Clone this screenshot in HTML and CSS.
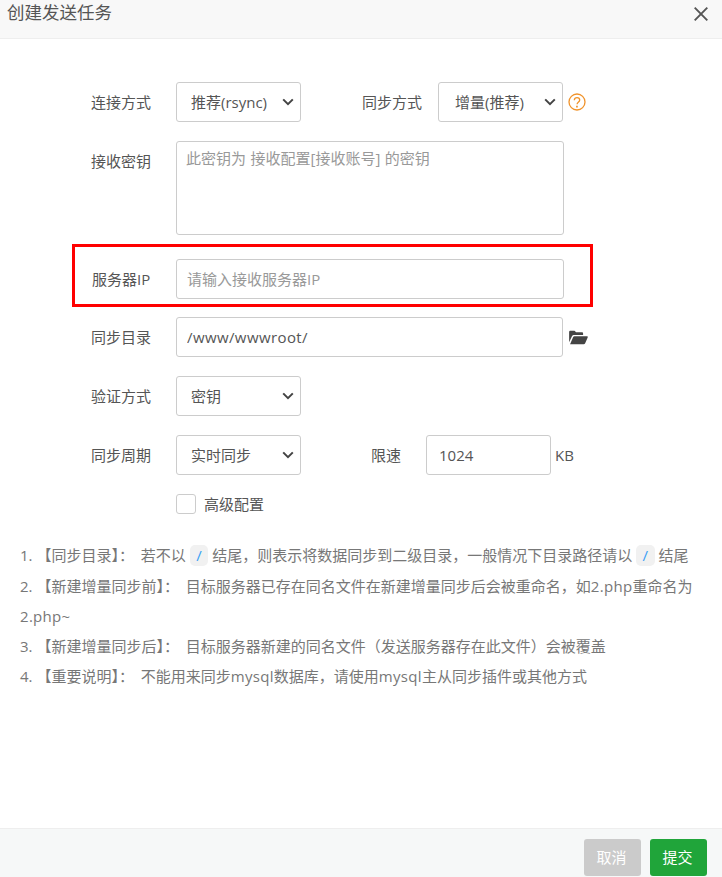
FILE: index.html
```html
<!DOCTYPE html>
<html lang="zh-CN">
<head>
<meta charset="utf-8">
<title>创建发送任务</title>
<link rel="stylesheet" href="styles.css">
</head>
<body>
<div class="dialog">
  <header class="dialog-header">
    <span class="dialog-title">创建发送任务</span>
    <svg class="close-icon" viewBox="0 0 14 14" width="14" height="14" aria-label="关闭"><path d="M.7.7L13.3 13.3M13.3.7L.7 13.3"/></svg>
  </header>
  <main class="dialog-body">
    <form class="form">
      <div class="row">
        <label class="label">连接方式</label>
        <select class="control select-sm"><option>推荐(rsync)</option></select>
        <label class="label label-second">同步方式</label>
        <select class="control select-sync"><option>增量(推荐)</option></select>
        <svg class="help-icon" viewBox="0 0 18 18" width="18" height="18"><circle cx="9" cy="9" r="8"/><path d="M6.3 7.2C6.3 5.6 7.5 4.6 9 4.6s2.7 1 2.7 2.4c0 1-.6 1.6-1.4 2.2-.8.6-1.2 1.1-1.2 2"/><path class="dot" d="M8.1 12.8h1.7v1.6H8.1z"/></svg>
      </div>
      <div class="row row-area">
        <label class="label label-top">接收密钥</label>
        <textarea class="control area" placeholder="此密钥为 接收配置[接收账号] 的密钥"></textarea>
      </div>
      <div class="row row-ip">
        <span class="highlight"></span>
        <label class="label label-ip">服务器IP</label>
        <input class="control input-wide" placeholder="请输入接收服务器IP">
      </div>
      <div class="row">
        <label class="label">同步目录</label>
        <input class="control input-path" value="/www/wwwroot/">
        <svg class="folder-icon" viewBox="0 0 20 16" width="19" height="15"><path d="M0 13V2.2C0 1.3.6.8 1.4.8h4c.7 0 1 .4 1.4 1l.5.7h6.3c.8 0 1.3.5 1.3 1.3v1.5H5.2c-1 0-1.7.5-2.2 1.3L0 13z"/><path d="M1 15.2l3.2-7.5c.3-.6.7-1 1.5-1H19c.7 0 1 .6.8 1.2l-2.7 6.2c-.3.7-.8 1.1-1.6 1.1H1z"/></svg>
      </div>
      <div class="row">
        <label class="label">验证方式</label>
        <select class="control select-sm"><option>密钥</option></select>
      </div>
      <div class="row">
        <label class="label">同步周期</label>
        <select class="control select-sm"><option>实时同步</option></select>
        <label class="label-limit">限速</label>
        <input class="control input-limit" value="1024">
        <span class="unit">KB</span>
      </div>
      <div class="row row-check">
        <span class="checkbox"></span>
        <span class="check-text">高级配置</span>
      </div>
    </form>
    <ul class="notes">
      <li class="note-first">1. 【同步目录】：<span class="key-gap"></span> 若不以 <code class="tag">/</code> 结尾，则表示将数据同步到二级目录，一般情况下目录路径请以 <code class="tag">/</code> 结尾</li>
      <li>2. 【新建增量同步前】：<span class="key-gap"></span> 目标服务器已存在同名文件在新建增量同步后会被重命名，如<span class="latin">2.php</span>重命名为<span class="latin">2.php~</span></li>
      <li>3. 【新建增量同步后】：<span class="key-gap"></span> 目标服务器新建的同名文件（发送服务器存在此文件）会被覆盖</li>
      <li>4. 【重要说明】：<span class="key-gap"></span> 不能用来同步<span class="latin">mysql</span>数据库，请使用<span class="latin">mysql</span>主从同步插件或其他方式</li>
    </ul>
  </main>
  <footer class="dialog-footer">
    <button class="btn btn-cancel" type="button">取消</button>
    <button class="btn btn-submit" type="button">提交</button>
  </footer>
</div>
</body>
</html>
```

FILE: styles.css
```css
* { box-sizing: border-box; }
html, body { margin: 0; height: 100%; }
body {
  font-family: "Open Sans", "Noto Sans CJK SC", sans-serif;
  font-size: 15px;
  color: #555;
  background: #fff;
}
.dialog { height: 877px; display: flex; flex-direction: column; overflow: hidden; }
.dialog-header {
  height: 39px;
  flex: none;
  background: #f8f8f8;
  border-bottom: 1px solid #eee;
  display: flex;
  align-items: flex-start;
  justify-content: space-between;
  padding: 0 14px 0 7px;
}
.dialog-title { font-size: 17.5px; line-height: 24px; color: #555; }
.close-icon { margin-top: 7px; fill: none; stroke: #555; stroke-width: 1.9; }
.dialog-body { flex: 1; min-height: 0; }
.form { padding-top: 43px; }
.row { display: flex; align-items: center; height: 40px; margin-bottom: 19px; padding-left: 91px; }
.label { width: 85px; flex: none; color: #555; line-height: 20px; }
.label-second { width: 76px; margin-left: 61px; }
.label-top { align-self: flex-start; padding-top: 10px; }
.label-ip { padding-left: 1px; }
.control {
  height: 40px;
  border: 1px solid #ccc;
  border-radius: 3px;
  background: #fff;
  font: inherit;
  color: #555;
  outline: none;
}
input.control, textarea.control { padding: 0 10px; }
select.control {
  appearance: none;
  -webkit-appearance: none;
  padding: 0 24px 0 14px;
  background-image: url("data:image/svg+xml,%3Csvg xmlns='http://www.w3.org/2000/svg' width='12' height='8' viewBox='0 0 12 8'%3E%3Cpath d='M1.2 1.4L6 6.2l4.8-4.8' fill='none' stroke='%23444' stroke-width='2'/%3E%3C/svg%3E");
  background-repeat: no-repeat;
  background-position: right 6px center;
}
.select-sm { width: 125px; }
.select-sync { width: 125px; padding-left: 16px !important; }
.help-icon { margin-left: 5px; fill: none; stroke: #f0932b; stroke-width: 1.3; }
.help-icon .dot { fill: #f0932b; stroke: none; }
.row-area { height: 94px; margin-bottom: 24px; align-items: flex-start; }
.area { width: 388px; height: 94px; padding: 5px 10px 0 9px !important; resize: none; word-spacing: .6px; }
.control::placeholder { color: #999; opacity: 1; }
.row-ip { position: relative; margin-bottom: 18px; }
.highlight {
  position: absolute;
  left: 72px;
  top: -15px;
  width: 521px;
  height: 63px;
  border: 3px solid #f00;
  pointer-events: none;
}
.input-wide { width: 388px; }
.input-path { width: 387px; letter-spacing: .4px; }
.folder-icon { margin-left: 6px; fill: #444; }
.label-limit { margin-left: 70px; width: 55px; line-height: 20px; }
.input-limit { width: 125px; padding: 0 12px !important; }
.unit { margin-left: 4px; line-height: 20px; }
.row-check { padding-left: 176px; height: 20px; margin-bottom: 0; }
.checkbox { width: 20px; height: 20px; border: 1px solid #ccc; border-radius: 3px; }
.check-text { margin-left: 8px; line-height: 20px; }
.notes { list-style: none; margin: 26px 0 0; padding: 0 19px 0 20px; color: #777; line-height: 30px; }
.note-first { margin-bottom: 1px; }
.key-gap { display: inline-block; width: 3px; }
.latin { letter-spacing: .3px; }
.tag {
  display: inline-block;
  font: inherit;
  line-height: 21px;
  padding: 0 6.5px;
  color: #3a9ff5;
  background: #f1f1f1;
  border-radius: 5px;
}
.dialog-footer {
  height: 49px;
  flex: none;
  background: #f6f8f8;
  border-top: 1px solid #eee;
  display: flex;
  justify-content: flex-end;
  align-items: flex-start;
  gap: 9px;
  padding: 10px 15px 0 0;
}
.btn { width: 57px; height: 37px; border: 0; border-radius: 3px; color: #fff; font: inherit; padding: 0 2px 2px 0; }
.btn-cancel { background: #cbcbcb; }
.btn-submit { background: #20a53a; }
```
